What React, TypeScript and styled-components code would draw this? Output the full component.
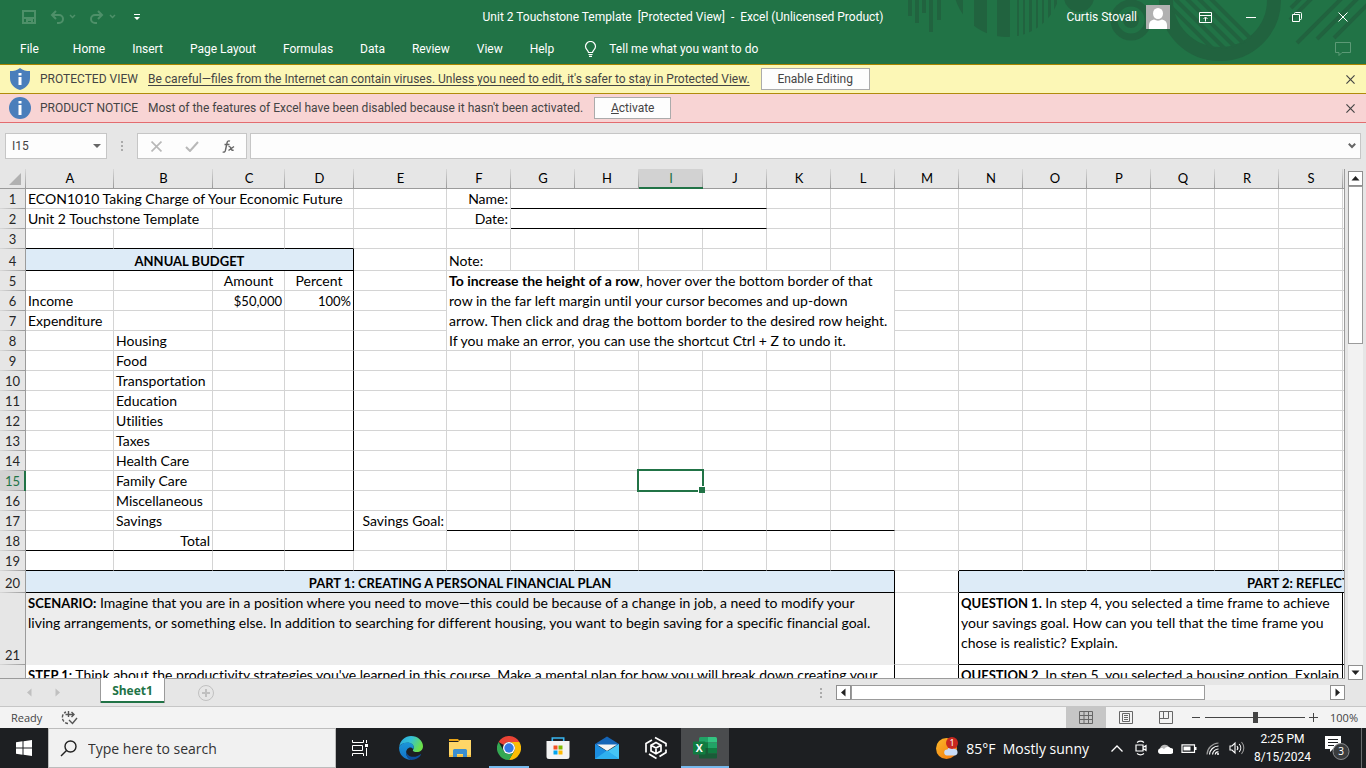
import React from 'react';
import styled, { createGlobalStyle, css } from 'styled-components';

const ui = 'Roboto, "Open Sans", sans-serif';
const shellFont = '"Open Sans", "Noto Sans", sans-serif';
const sheetFont = 'Lato, "Open Sans", sans-serif';
const green = '#217346';

const Global = createGlobalStyle`
  * { box-sizing: border-box; }
  html, body { margin: 0; height: 100%; overflow: hidden; }
  body { font-family: ${ui}; font-size: 12px; color: #444; background: #e6e6e6; }
  button, input { font: inherit; color: inherit; margin: 0; }
  button { border: 0; padding: 0; background: none; }
  svg { display: block; flex: none; }
`;

const Shell = styled.div`
  height: 100vh;
  display: flex;
  flex-direction: column;
`;

/* ---------- title bar and ribbon tabs ---------- */

const Header = styled.header`
  position: relative;
  overflow: hidden;
  background: ${green};
  color: #fff;
  height: 65px;
  flex: none;
  border-bottom: 1px solid #a98500;
`;

const Backdrop = styled.svg`
  position: absolute;
  top: 0;
  right: 0;
`;

const TitleRow = styled.div`
  position: relative;
  display: grid;
  grid-template-columns: 1fr auto 1fr;
  align-items: center;
  height: 34px;
`;

const QuickAccess = styled.div`
  display: flex;
  align-items: center;
  padding-left: 22px;
`;

const IconButton = styled.button<{ $w: number; $h?: number }>`
  width: ${(p) => p.$w}px;
  height: ${(p) => p.$h ?? 24}px;
  display: flex;
  align-items: center;
  justify-content: center;
  flex: none;
`;

const Title = styled.h1`
  margin: 0;
  font-size: 12px;
  font-weight: 400;
  white-space: pre;
`;

const Account = styled.div`
  display: flex;
  align-items: center;
  justify-content: flex-end;
`;

const UserName = styled.span`
  margin-right: 9px;
`;

const WindowButtons = styled.div`
  display: flex;
  align-items: center;
  height: 30px;
  align-self: flex-start;
  margin-left: 12px;
`;

const TabRow = styled.nav`
  position: relative;
  display: flex;
  align-items: center;
  height: 30px;
  padding-left: 6px;
`;

const Tab = styled.button<{ $wide?: boolean }>`
  height: 30px;
  padding: 0 13px 0 14px;
  margin-right: ${(p) => (p.$wide ? 7 : 0)}px;
  white-space: nowrap;
`;

const TellMe = styled.button`
  display: flex;
  align-items: center;
  gap: 12px;
  margin-left: 17px;
  white-space: nowrap;
`;

const Push = styled.span`
  flex: 1;
`;

/* ---------- message bars ---------- */

const Notice = styled.section<{ $bg: string; $line: string }>`
  display: flex;
  align-items: center;
  flex: none;
  height: 29px;
  padding: 0 8px;
  background: ${(p) => p.$bg};
  border-bottom: 1px solid ${(p) => p.$line};
  white-space: nowrap;
`;

const NoticeTitle = styled.strong`
  font-weight: 400;
  width: 108px;
  margin-left: 8px;
`;

const NoticeLink = styled.a`
  color: inherit;
  text-decoration: underline;
  text-underline-offset: 2px;
`;

const NoticeButton = styled.button<{ $w: number }>`
  height: 22px;
  width: ${(p) => p.$w}px;
  margin-left: 11px;
  background: #fdfdfd;
  border: 1px solid #ababab;
`;

/* ---------- formula bar ---------- */

const FormulaBar = styled.div`
  display: flex;
  align-items: center;
  flex: none;
  height: 46px;
  padding: 0 5px;
`;

const Field = styled.div<{ $w?: number; $gap?: number }>`
  display: flex;
  align-items: center;
  height: 26px;
  margin-left: ${(p) => p.$gap ?? 0}px;
  background: #fdfdfd;
  border: 1px solid #c6c6c6;
  ${(p) => (p.$w ? css`width: ${p.$w}px; flex: none;` : css`flex: 1;`)}
`;

const TextInput = styled.input`
  flex: 1;
  min-width: 0;
  border: 0;
  outline: 0;
  padding: 0 6px;
  background: transparent;
`;

const Grip = styled.span`
  display: flex;
  justify-content: center;
  width: 30px;
`;

/* ---------- worksheet ---------- */

const SheetArea = styled.main`
  display: flex;
  flex: 1;
  min-height: 0;
`;

const Viewport = styled.div`
  flex: 1;
  min-width: 0;
  overflow: hidden;
  background: #fff;
  border-right: 1px solid #9b9b9b;
  border-bottom: 1px solid #9b9b9b;
`;

const Grid = styled.table`
  border-collapse: separate;
  border-spacing: 0;
  table-layout: fixed;
  width: 1px;
  font-family: ${sheetFont};
  font-size: 14px;
  font-variant-ligatures: none;
  line-height: 19px;
  color: #000;
`;

const ColHead = styled.th<{ $on?: boolean }>`
  height: 20px;
  padding: 0;
  font-weight: 400;
  font-size: 13px;
  vertical-align: top;
  line-height: 18px;
  color: ${(p) => (p.$on ? green : '#000')};
  border-bottom: ${(p) => (p.$on ? `2px solid ${green}` : '1px solid #9b9b9b')};
  background: linear-gradient(#d8d8d8, #9b9b9b) right / 1px 100% no-repeat ${(p) => (p.$on ? '#d2d2d2' : '#e6e6e6')};
`;

const Corner = styled.th`
  padding: 0;
  border-bottom: 1px solid #9b9b9b;
  background: linear-gradient(#d8d8d8, #9b9b9b) right / 1px 100% no-repeat #e6e6e6;
`;

const RowHead = styled.th<{ $h: number; $on?: boolean }>`
  height: ${(p) => p.$h}px;
  padding: 0 0 1px ${(p) => (p.$on ? 1 : 0)}px;
  font-weight: 400;
  font-size: 13px;
  vertical-align: bottom;
  line-height: 18px;
  color: ${(p) => (p.$on ? green : '#262626')};
  border-right: ${(p) => (p.$on ? `2px solid ${green}` : '1px solid #9b9b9b')};
  background: linear-gradient(to right, #d8d8d8, #9b9b9b) bottom / 100% 1px no-repeat ${(p) => (p.$on ? '#d2d2d2' : '#e6e6e6')};
`;

type CellStyle = {
  $align?: 'left' | 'center' | 'right';
  $small?: boolean;
  $bold?: boolean;
  $bg?: string;
  $right: string;
  $bottom: string;
  $wrap?: boolean;
};

const Cell = styled.td<CellStyle>`
  position: relative;
  padding: 0 2px;
  vertical-align: ${(p) => (p.$wrap ? 'top' : 'bottom')};
  line-height: ${(p) => (p.$wrap ? 20 : p.$small || p.$bold ? 17 : 19)}px;
  white-space: nowrap;
  text-align: ${(p) => p.$align ?? 'left'};
  font-weight: ${(p) => (p.$bold ? 700 : 400)};
  font-size: ${(p) => (p.$small || p.$bold ? 13 : 14)}px;
  background: ${(p) => p.$bg ?? '#fff'};
  border-right: 1px solid ${(p) => p.$right};
  border-bottom: 1px solid ${(p) => p.$bottom};
`;

/* A merged block of text gives its last pixel up to the cell's grid line. */
const Lines = styled.div`
  margin-bottom: -1px;
`;

const Lead = styled.b`
  font-size: 13px;
`;

const Selection = styled.span`
  position: absolute;
  inset: -2px;
  border: 2px solid ${green};
  z-index: 1;
  &::after {
    content: '';
    position: absolute;
    right: -3px;
    bottom: -3px;
    width: 6px;
    height: 6px;
    background: ${green};
    border: solid #fff;
    border-width: 1px 0 0 1px;
  }
`;

/* ---------- scroll bars ---------- */

const VScroll = styled.div`
  display: flex;
  flex-direction: column;
  width: 21px;
  padding: 2px 0 0 3px;
  margin-bottom: -1px;
`;

const ScrollButton = styled.button`
  display: flex;
  align-items: center;
  justify-content: center;
  flex: none;
  width: 15px;
  height: 15px;
  background: #fff;
  border: 1px solid #8f8f8f;
`;

const VTrack = styled.div`
  flex: 1;
  width: 15px;
  background: #f2f2f2;
`;

const VThumb = styled.div`
  height: 33%;
  background: #fff;
  border: 1px solid #9b9b9b;
`;

const HScroll = styled.div`
  display: flex;
  align-items: center;
  width: 509px;
`;

const HTrack = styled.div`
  flex: 1;
  height: 15px;
  background: #f2f2f2;
`;

const HThumb = styled.div`
  width: 74%;
  height: 15px;
  background: #fff;
  border: 1px solid #9b9b9b;
`;

/* ---------- sheet tabs and status bar ---------- */

const TabStrip = styled.div`
  display: flex;
  align-items: center;
  flex: none;
  height: 28px;
  padding-right: 21px;
  border-bottom: 1px solid #c6c6c6;
`;

const SheetNav = styled.div`
  display: flex;
  align-items: center;
  width: 100px;
  padding-left: 15px;
`;

const SheetTab = styled.button`
  position: relative;
  align-self: flex-start;
  width: 65px;
  height: 25px;
  margin-top: -1px;
  background: #fff;
  border: solid #9b9b9b;
  border-width: 0 1px;
  box-shadow: inset 0 -2px ${green};
  color: ${green};
  font-family: ${shellFont};
  font-weight: 700;
`;

const StatusBar = styled.footer`
  display: flex;
  align-items: center;
  flex: none;
  height: 21px;
  padding: 0 8px 0 11px;
  background: #f3f3f3;
  font-family: ${shellFont};
  font-size: 11px;
`;

const ViewButton = styled.button<{ $on?: boolean }>`
  display: flex;
  align-items: center;
  justify-content: center;
  width: 40px;
  height: 21px;
  background: ${(p) => (p.$on ? '#c6c6c6' : 'transparent')};
`;

const ZoomSlider = styled.input`
  appearance: none;
  width: 100px;
  height: 12px;
  background: linear-gradient(#444, #444) center / 100% 1px no-repeat;
  &::-webkit-slider-thumb {
    appearance: none;
    width: 5px;
    height: 11px;
    background: #444;
  }
`;

const ZoomValue = styled.span`
  width: 37px;
  text-align: right;
`;

/* ---------- task bar ---------- */

const Taskbar = styled.footer`
  display: flex;
  align-items: stretch;
  flex: none;
  height: 40px;
  background: #1d1f22;
  color: #fff;
  font-family: ${shellFont};
`;

const Start = styled.button`
  display: flex;
  align-items: center;
  justify-content: center;
  width: 48px;
`;

const Search = styled.label`
  display: flex;
  align-items: center;
  width: 288px;
  padding-left: 11px;
  background: #f1f1f1;
  border: 1px solid #bcbcbc;
  color: #333;
  font-size: 14px;
  input { padding-left: 11px; }
  input::placeholder { color: #333; opacity: 1; }
`;

const Apps = styled.div`
  display: flex;
  gap: 1px;
`;

const AppButton = styled.button<{ $state?: 'open' | 'active'; $after?: number }>`
  display: flex;
  align-items: center;
  justify-content: center;
  width: 48px;
  margin-right: ${(p) => p.$after ?? 0}px;
  ${(p) => p.$state === 'open' && css`background: linear-gradient(#76b9ed, #76b9ed) bottom / 40px 2px no-repeat;`}
  ${(p) => p.$state === 'active' && css`background: linear-gradient(#76b9ed, #76b9ed) bottom / 100% 2px no-repeat, #4a4c4e;`}
`;

const Weather = styled.button`
  display: flex;
  align-items: center;
  gap: 8px;
  margin-right: 16px;
  font-size: 14px;
  white-space: pre;
`;

const TrayButton = styled.button<{ $w: number }>`
  display: flex;
  align-items: center;
  justify-content: center;
  width: ${(p) => p.$w}px;
`;

const Clock = styled.button`
  width: 67px;
  font-family: ${ui};
  line-height: 18px;
  text-align: center;
`;

const ShowDesktop = styled.span`
  width: 5px;
  margin-left: 3px;
  border-left: 1px solid #6a6c6e;
`;

/* ---------- small icons ---------- */

const Cross = ({ size = 10, color = '#444', w = 1.3 }) => (
  <svg width={size} height={size} viewBox="0 0 10 10" stroke={color} strokeWidth={w}>
    <path d="M.5 .5l9 9M9.5 .5l-9 9" />
  </svg>
);

const Caret = ({ color }: { color: string }) => (
  <svg width="8" height="6" fill="none" stroke={color} strokeWidth="2"><path d="M.8 .8L4 4 7.200 .8" /></svg>
);

const Tri = ({ d, color = '#222' }: { d: string; color?: string }) => (
  <svg width="9" height="9" fill={color}><path d={d} /></svg>
);
const up = 'M4.500 2L8.500 6.500H.5z';
const down = 'M4.500 7L.5 2.500h8z';
const left = 'M2 4.500L6.500 .5v8z';
const right = 'M7 4.500L2.500 .5v8z';

const Dots = () => (
  <svg width="2" height="12" fill="#ababab"><path d="M0 1h2v2H0zM0 5h2v2H0zM0 9h2v2H0z" /></svg>
);

const HeaderArt = () => (
  <Backdrop width="466" height="64" viewBox="900 0 466 64" aria-hidden="true">
    <defs>
      <clipPath id="disc"><circle cx="1007" cy="-17" r="54" /></clipPath>
      <clipPath id="hole"><circle cx="1220" cy="0" r="49" /></clipPath>
    </defs>
    <g fill="#21633f">
      <path d="M908 0h4v16h-4zM915 0h4v23h-4zM922 0h4v13h-4zM929 0h4v32h-4zM937 0h4v20h-4z" />
      <g clipPath="url(#disc)">
        <path d="M955 0h8v40h-8zM974 0h13v40h-13zM997 0h13v40h-13zM1017 0h2v40h-2zM1023 0h2v40h-2zM1029 0h3v40h-3zM1036 0h2v40h-2zM1042 0h2v40h-2zM1048 0h3v40h-3zM1054 0h3v40h-3z" />
      </g>
      <circle cx="1079" cy="-3" r="15" />
    </g>
    <g fill="none" stroke="#21633f">
      <circle cx="1131" cy="20" r="17" strokeWidth="7" />
      <circle cx="1131" cy="20" r="5" strokeWidth="6" />
      <circle cx="1220" cy="0" r="54" strokeWidth="14" />
      <g clipPath="url(#hole)" strokeWidth="4">
        <path d="M1168 4l56 56M1175 -1l56 56M1183 -5l56 56M1193 -7l56 56M1204 -8l56 56" />
      </g>
      <g strokeWidth="4">
        <path d="M1291 8l10 -10M1290 20l24 -24M1297 43l46 -46M1317 39l42 -42M1334 38l34 -34" />
      </g>
    </g>
  </Backdrop>
);

/* ---------- worksheet data ---------- */

const columns = 'ABCDEFGHIJKLMNOPQRSTUVWX'.split('');
const colWidth: Record<string, number> = { A: 88, B: 99, C: 72, D: 69, E: 93 };
const tallRows: Record<number, number> = { 4: 22, 20: 22, 21: 72, 22: 192 };
const rowHeights = Array.from({ length: 24 }, (_, i) => tallRows[i + 1] ?? 20);

type Entry = {
  text?: React.ReactNode;
  cols?: number;
  rows?: number;
  align?: 'left' | 'center' | 'right';
  small?: boolean;
  bold?: boolean;
  bg?: string;
  wrap?: boolean;
  bottom?: string;
};

const blue = '#ddebf7';
const entries: Record<string, Entry> = {
  A1: { text: 'ECON1010 Taking Charge of Your Economic Future', cols: 4 },
  F1: { text: 'Name:', align: 'right' },
  G1: { cols: 4 },
  A2: { text: 'Unit 2 Touchstone Template', cols: 2 },
  F2: { text: 'Date:', align: 'right' },
  G2: { cols: 4 },
  A4: { text: 'ANNUAL BUDGET', cols: 4, align: 'center', bold: true, bg: blue },
  F4: { text: 'Note:' },
  C5: { text: 'Amount', align: 'center' },
  D5: { text: 'Percent', align: 'center' },
  F5: {
    cols: 7, rows: 4, wrap: true,
    text: (
      <Lines>
        <b>To increase the height of a row</b>, hover over the bottom border of that<br />
        row in the far left margin until your cursor becomes and up-down<br />
        arrow. Then click and drag the bottom border to the desired row height.<br />
        If you make an error, you can use the shortcut Ctrl + Z to undo it.
      </Lines>
    ),
  },
  A6: { text: 'Income' },
  C6: { text: '$50,000', align: 'right', small: true },
  D6: { text: '100%', align: 'right', small: true },
  A7: { text: 'Expenditure' },
  B8: { text: 'Housing' },
  B9: { text: 'Food' },
  B10: { text: 'Transportation' },
  B11: { text: 'Education' },
  B12: { text: 'Utilities' },
  B13: { text: 'Taxes' },
  B14: { text: 'Health Care' },
  B15: { text: 'Family Care' },
  I15: { text: <Selection /> },
  B16: { text: 'Miscellaneous' },
  B17: { text: 'Savings' },
  E17: { text: 'Savings Goal:', align: 'right' },
  B18: { text: 'Total', align: 'right' },
  A20: { text: 'PART 1: CREATING A PERSONAL FINANCIAL PLAN', cols: 12, align: 'center', bold: true, bg: blue },
  N20: { text: 'PART 2: REFLECTION', cols: 11, align: 'center', bold: true, bg: blue },
  A21: {
    cols: 12, wrap: true, bg: '#ededed', bottom: '#ededed',
    text: (
      <Lines>
        <Lead>SCENARIO:</Lead> Imagine that you are in a position where you need to move—this could be because of a change in job, a need to modify your<br />
        living arrangements, or something else. In addition to searching for different housing, you want to begin saving for a specific financial goal.
      </Lines>
    ),
  },
  N21: {
    cols: 6, wrap: true,
    text: (
      <Lines>
        <Lead>QUESTION 1.</Lead> In step 4, you selected a time frame to achieve<br />
        your savings goal. How can you tell that the time frame you<br />
        chose is realistic? Explain.
      </Lines>
    ),
  },
  A22: {
    cols: 12, wrap: true,
    text: (
      <Lines>
        <Lead>STEP 1:</Lead> Think about the productivity strategies you've learned in this course. Make a mental plan for how you will break down creating your
      </Lines>
    ),
  },
  N22: {
    cols: 6, wrap: true,
    text: (<Lines><Lead>QUESTION 2.</Lead> In step 5, you selected a housing option. Explain</Lines>),
  },
};

const inRange = (c: number, from: string, to: string) => c >= columns.indexOf(from) && c <= columns.indexOf(to);

const rightEdge = (r: number, c: number) => {
  const col = columns[c];
  if (col === 'D' && r >= 4 && r <= 18) return '#000';
  if ((col === 'L' || col === 'M') && r >= 20 && r <= 22) return '#000';
  if (col === 'S' && (r === 21 || r === 22)) return '#000';
  return '#d4d4d4';
};

const bottomEdge = (r: number, c: number) => {
  if ([3, 4, 18].includes(r) && inRange(c, 'A', 'D')) return '#000';
  if ((r === 1 || r === 2) && inRange(c, 'G', 'J')) return '#000';
  if (r === 17 && inRange(c, 'F', 'L')) return '#000';
  if ([19, 20, 22].includes(r) && inRange(c, 'A', 'L')) return '#000';
  if (r >= 19 && r <= 22 && inRange(c, 'N', 'X')) return '#000';
  return '#d4d4d4';
};

function SheetRow({ r }: { r: number }) {
  const cells: React.ReactNode[] = [];
  let c = 0;
  while (c < columns.length) {
    if (columns[c] === 'F' && r >= 6 && r <= 8) {
      c += 7;
      continue;
    }
    const e = entries[columns[c] + r] ?? {};
    const span = e.cols ?? 1;
    cells.push(
      <Cell
        key={c}
        colSpan={span}
        rowSpan={e.rows}
        $align={e.align}
        $small={e.small}
        $bold={e.bold}
        $bg={e.bg}
        $wrap={e.wrap}
        $right={rightEdge(r, c + span - 1)}
        $bottom={e.bottom ?? bottomEdge(r, c)}
      >
        {e.text}
      </Cell>,
    );
    c += span;
  }
  return (
    <tr>
      <RowHead scope="row" $h={rowHeights[r - 1]} $on={r === 15}>{r}</RowHead>
      {cells}
    </tr>
  );
}

const Worksheet = () => (
  <Grid>
    <colgroup>
      <col style={{ width: 26 }} />
      {columns.map((c) => <col key={c} style={{ width: colWidth[c] ?? 64 }} />)}
    </colgroup>
    <thead>
      <tr>
        <Corner>
          <svg width="25" height="19" fill="#b1b1b1" aria-label="Select all"><path d="M21 4v12H9z" /></svg>
        </Corner>
        {columns.map((c) => <ColHead key={c} scope="col" $on={c === 'I'}>{c}</ColHead>)}
      </tr>
    </thead>
    <tbody>{rowHeights.map((_, i) => <SheetRow key={i} r={i + 1} />)}</tbody>
  </Grid>
);

/* ---------- task bar icons ---------- */

const Edge = () => (
  <svg width="24" height="24" viewBox="0 0 24 24">
    <defs>
      <linearGradient id="e1" x1="0" y1="0" x2="1" y2=".4"><stop offset="0" stopColor="#2aa7e0" /><stop offset=".5" stopColor="#35c1d6" /><stop offset="1" stopColor="#6be04a" /></linearGradient>
      <linearGradient id="e2" x1="0" y1="0" x2="0" y2="1"><stop offset="0" stopColor="#1b95d8" /><stop offset="1" stopColor="#1373c6" /></linearGradient>
    </defs>
    <path fill="url(#e1)" d="M0.300 10.500C1.200 4.200 6.200 0 12 0c7 0 12 5 12 10.200 0 3.500-2.800 5.900-6.200 5.900-2.600 0-4-.9-4-1.800 0-.8 1-1 1-2.900 0-2.600-3-4.600-6.400-4.600C4.700 6.800 1.800 8 .3 10.500z" />
    <path fill="url(#e2)" d="M.2 10.800C1.500 8.200 4.600 6.600 8.300 6.600c3.500 0 6.500 2 6.500 4.700 0 .9-.3 1.600-.6 2-.6-1.300-1.700-1.800-2.800-1.800-2.600 0-4.600 2.800-4.300 6 .3 2.900 2.300 5.300 5.200 6.500C5.400 24.300-.8 18.200.2 10.800z" />
    <path fill="#0c4f9e" d="M7.100 15.200c.4 3.400 3.400 5.600 7.200 5.600 3.100 0 5.400-1.200 7.200-2.600.4-.2.800.1.500.6C20 22 16.500 24 12.600 24 9.200 22.800 6.500 19.400 7.100 15.200z" />
  </svg>
);

const Folder = () => (
  <svg width="22" height="19" viewBox="0 0 22 19">
    <path fill="#e8a317" d="M0 0h9l1.500 2H0z" />
    <path fill="#ffd667" d="M0 3h9l2-2h11v17H0z" />
    <path fill="#f5bf3f" d="M0 16h22v2H0z" />
    <path fill="#3c8fd0" d="M4 11.500a1.500 1.500 0 0 1 1.500-1.500h11a1.500 1.500 0 0 1 1.500 1.500V18h-4v-3H8v3H4z" />
  </svg>
);

const Chrome = () => (
  <svg width="24" height="24" viewBox="0 0 24 24">
    <path fill="#ea4335" d="M1.600 6A12 12 0 0 1 22.400 6H12a6 6 0 0 0-5.200 3z" />
    <path fill="#fbbc05" d="M22.400 6A12 12 0 0 1 12 24l5.200-9A6 6 0 0 0 12 6z" />
    <path fill="#34a853" d="M12 24A12 12 0 0 1 1.600 6l5.200 9A6 6 0 0 0 17.200 15z" />
    <circle cx="12" cy="12" r="6" fill="#fff" />
    <circle cx="12" cy="12" r="4.700" fill="#3478e5" />
  </svg>
);

const Store = () => (
  <svg width="24" height="24" viewBox="0 0 24 24">
    <path fill="none" stroke="#38b6f1" strokeWidth="1.600" d="M6.300 6V2h11.400v4" />
    <path fill="#f3f3f3" d="M.5 5h23v15.500a2.500 2.500 0 0 1-2.500 2.500H3A2.500 2.500 0 0 1 .5 20.500z" />
    <path fill="#f25022" d="M7.500 9.500h4v4h-4z" />
    <path fill="#7fba00" d="M12.500 9.500h4v4h-4z" />
    <path fill="#00a4ef" d="M7.500 14.500h4v4h-4z" />
    <path fill="#ffb900" d="M12.500 14.500h4v4h-4z" />
  </svg>
);

const Mail = () => (
  <svg width="24" height="24" viewBox="0 0 24 24">
    <path fill="#1565b7" d="M0 8L12 .5 24 8v2H0z" />
    <path fill="#f4f4f4" d="M2 8.500h20L12 15z" />
    <path fill="#45c4f5" d="M24 8v15H0z" />
    <path fill="#1b8de0" d="M0 8l12 7.200L24 23H0z" />
    <path fill="#2fb0ef" d="M0 23l12-8.500L24 23z" />
  </svg>
);

const Cube = () => (
  <svg width="22" height="24" viewBox="0 0 22 24" fill="none" stroke="#fff" strokeWidth="1.700">
    <path d="M11 6.500l5 2.800v5.600l-5 2.800-5-2.800V9.300zM6 9.300l5 2.800 5-2.800M11 12.100v5.600" />
    <path d="M1 16.500v-9l6-3.500M10 1.500l11 6v3M21 13.500v3l-6.500 4M11.500 22.500L4 18" />
  </svg>
);

const Excel = () => (
  <svg width="24" height="22" viewBox="0 0 24 22">
    <path fill="#21a366" d="M6 1.500A1.500 1.500 0 0 1 7.500 0H15v5.500H6z" />
    <path fill="#33c481" d="M15 0h7.500A1.500 1.500 0 0 1 24 1.500v4h-9z" />
    <path fill="#107c41" d="M6 5.500h9V11H6zM15 11h9v5.500h-9z" />
    <path fill="#21a366" d="M15 5.500h9V11h-9z" />
    <path fill="#185c37" d="M6 11h9v5.500h9v4a1 1 0 0 1-1 1H7a1 1 0 0 1-1-1z" />
    <rect y="4.500" width="12.500" height="13" rx="1" fill="#107c41" />
    <text x="6.200" y="14.800" textAnchor="middle" fontSize="10.500" fontWeight="700" fill="#fff" fontFamily="Open Sans">X</text>
  </svg>
);

const WeatherIcon = () => (
  <svg width="22" height="22" viewBox="0 0 22 22">
    <defs><linearGradient id="sun" x1="0" y1="0" x2="1" y2="1"><stop offset="0" stopColor="#fbb829" /><stop offset="1" stopColor="#f2760e" /></linearGradient></defs>
    <circle cx="10.500" cy="11.500" r="10.500" fill="url(#sun)" />
    <path fill="#c9dcf8" d="M11 18.500a3 3 0 0 1 .4-6A4 4 0 0 1 18.500 12a3.300 3.300 0 0 1 .5 6.500z" />
    <circle cx="16" cy="6" r="6" fill="#c8281f" />
    <text x="16" y="9" textAnchor="middle" fontSize="9" fill="#fff" fontFamily="Noto Sans">1</text>
  </svg>
);

const apps: { name: string; icon: React.ReactNode; state?: 'open' | 'active'; after?: number }[] = [
  {
    name: 'Task view', after: 2,
    icon: (
      <svg width="18" height="16" fill="none" stroke="#fff">
        <path d="M1.500 0v2.500h11V0M1.500 16v-2.500h11V16M1.500 5.500h10v5h-10zM15.500 0v3M15.500 8v8" />
        <path d="M14 4h3v3h-3z" fill="#fff" stroke="none" />
      </svg>
    ),
  },
  { name: 'Edge', icon: <Edge /> },
  { name: 'File Explorer', icon: <Folder /> },
  { name: 'Chrome', icon: <Chrome />, state: 'open' },
  { name: 'Store', icon: <Store /> },
  { name: 'Mail', icon: <Mail /> },
  { name: '3D Viewer', icon: <Cube /> },
  { name: 'Excel', icon: <Excel />, state: 'active' },
];

const ribbonTabs = ['Home', 'Insert', 'Page Layout', 'Formulas', 'Data', 'Review', 'View', 'Help'];

export default function App() {
  return (
    <Shell>
      <Global />
      <Header>
        <HeaderArt />
        <TitleRow>
          <QuickAccess>
            <IconButton $w={14} aria-label="Save">
              <svg width="14" height="14" fill="none" stroke="#4e9069" strokeWidth="2">
                <path d="M1 1h12v12H1zM1 8h12M5 13v-3h5v3" />
              </svg>
            </IconButton>
            <IconButton $w={54} aria-label="Undo">
              <svg width="26" height="14" fill="none" stroke="#4e9069" strokeWidth="2">
                <path d="M6 1L2 5l4 4M2 5h7a4 4 0 0 1 0 8H7" />
                <path d="M20 5l2.500 2.500L25 5" strokeWidth="1.500" />
              </svg>
            </IconButton>
            <IconButton $w={26} aria-label="Redo">
              <svg width="28" height="14" fill="none" stroke="#4e9069" strokeWidth="2">
                <path d="M9 1l4 4-4 4M13 5H6a4 4 0 0 0 0 8h2" />
                <path d="M21 5l2.500 2.500L26 5" strokeWidth="1.500" />
              </svg>
            </IconButton>
            <IconButton $w={42} aria-label="Customize Quick Access Toolbar">
              <svg width="6" height="7" fill="#fff"><path d="M0 0h6v1H0zM0 3h6L3 6z" /></svg>
            </IconButton>
          </QuickAccess>
          <Title>{'Unit 2 Touchstone Template  [Protected View]  -  Excel (Unlicensed Product)'}</Title>
          <Account>
            <UserName>Curtis Stovall</UserName>
            <svg width="24" height="24" aria-label="Profile picture">
              <path fill="#b1b1b1" d="M0 0h24v24H0z" />
              <ellipse cx="12" cy="8.500" rx="5" ry="5.500" fill="#fff" />
              <path fill="#fff" d="M3 24v-4c0-3 2-5 5-5.500 2.500 1.500 5.500 1.500 8 0 3 .5 5 2.500 5 5.500v4z" />
            </svg>
            <WindowButtons>
              <IconButton $w={46} aria-label="Ribbon display options">
                <svg width="13" height="11" fill="none" stroke="#fff"><path d="M.5 .5h12v10H.5zM.5 3.500h12M6.500 9.500V5.500M4.500 7l2-2 2 2" /></svg>
              </IconButton>
              <IconButton $w={46} aria-label="Minimize">
                <svg width="10" height="1" fill="#fff"><path d="M0 0h10v1H0z" /></svg>
              </IconButton>
              <IconButton $w={46} aria-label="Restore">
                <svg width="10" height="10" fill="none" stroke="#fff"><path d="M.5 2.500h7v7h-7zM2.500 2.500V1.500a1 1 0 0 1 1-1h5a1 1 0 0 1 1 1v5a1 1 0 0 1-1 1h-1" /></svg>
              </IconButton>
              <IconButton $w={46} aria-label="Close"><Cross color="#fff" w={1} /></IconButton>
            </WindowButtons>
          </Account>
        </TitleRow>
        <TabRow>
          <Tab $wide>File</Tab>
          {ribbonTabs.map((t) => <Tab key={t}>{t}</Tab>)}
          <TellMe>
            <svg width="13" height="16" fill="none" stroke="#fff" strokeWidth="1.200">
              <path d="M4.500 11.500c0-2-3-3-3-6a5 5 0 0 1 10 0c0 3-3 4-3 6zM4.500 13.500h4M5 15.400h3" />
            </svg>
            Tell me what you want to do
          </TellMe>
          <Push />
          <IconButton $w={46} aria-label="Comments">
            <svg width="16" height="14" fill="none" stroke="#5c9a76"><path d="M.5 .5h15v10H7l-3 3v-3H.5z" /></svg>
          </IconButton>
        </TabRow>
      </Header>

      <Notice $bg="#fcf7b6" $line="#b08c0c">
        <svg width="24" height="22" viewBox="0 0 24 22">
          <path fill="#4a7ebb" d="M12 0c3 2.500 6 3 10 3v7c0 6-4 10-10 12C6 20 2 16 2 10V3c4 0 7-.5 10-3z" />
          <path fill="#fff" d="M10.500 5h3v2.500h-3zM10.500 9h3v8h-3z" />
        </svg>
        <NoticeTitle>PROTECTED VIEW</NoticeTitle>
        <NoticeLink href="#">Be careful—files from the Internet can contain viruses. Unless you need to edit, it's safer to stay in Protected View.</NoticeLink>
        <NoticeButton $w={109}>Enable Editing</NoticeButton>
        <Push />
        <IconButton $w={16} aria-label="Close message"><Cross size={9} /></IconButton>
      </Notice>
      <Notice $bg="#f8d4d4" $line="#e36c6f">
        <svg width="24" height="22" viewBox="0 0 24 22">
          <circle cx="12" cy="11" r="11" fill="#4a7ebb" />
          <path fill="#fff" d="M10.500 4h3v2.500h-3zM10.500 8h3v10h-3z" />
        </svg>
        <NoticeTitle>PRODUCT NOTICE</NoticeTitle>
        <span>Most of the features of Excel have been disabled because it hasn't been activated.</span>
        <NoticeButton $w={77}><u>A</u>ctivate</NoticeButton>
        <Push />
        <IconButton $w={16} aria-label="Close message"><Cross size={9} /></IconButton>
      </Notice>

      <FormulaBar>
        <Field $w={102}>
          <TextInput defaultValue="I15" aria-label="Name box" />
          <IconButton $w={19} aria-label="Named ranges">
            <svg width="8" height="4" fill="#666"><path d="M0 0h8L4 4z" /></svg>
          </IconButton>
        </Field>
        <Grip><Dots /></Grip>
        <Field $w={110}>
          <IconButton $w={36} aria-label="Cancel"><Cross size={11} color="#b8b8b8" w={1.5} /></IconButton>
          <IconButton $w={36} aria-label="Enter">
            <svg width="14" height="11" fill="none" stroke="#b8b8b8" strokeWidth="2"><path d="M1 6l4 4 8-9" /></svg>
          </IconButton>
          <IconButton $w={36} aria-label="Insert function">
            <svg width="13" height="13" fill="none" stroke="#666" strokeWidth="1.400">
              <path d="M8 1.200C6 .3 5.300 1.500 5 3L3.500 10c-.3 1.800-1.200 2.500-2.800 2M2.500 4.500h5" />
              <path d="M6.500 6.500c1.500-.5 2 .5 2.500 2s1.200 2.300 2.700 1.500M12 6.500L6.500 10.500" />
            </svg>
          </IconButton>
        </Field>
        <Field $gap={3}>
          <TextInput aria-label="Formula" />
          <IconButton $w={16} aria-label="Expand formula bar"><Caret color="#666" /></IconButton>
        </Field>
      </FormulaBar>

      <SheetArea>
        <Viewport><Worksheet /></Viewport>
        <VScroll>
          <ScrollButton aria-label="Scroll up"><Tri d={up} /></ScrollButton>
          <VTrack><VThumb /></VTrack>
          <ScrollButton aria-label="Scroll down"><Tri d={down} /></ScrollButton>
        </VScroll>
      </SheetArea>

      <TabStrip>
        <SheetNav>
          <IconButton $w={28} aria-label="Previous sheet"><Tri d={left} color="#c0c0c0" /></IconButton>
          <IconButton $w={28} aria-label="Next sheet"><Tri d={right} color="#c0c0c0" /></IconButton>
        </SheetNav>
        <SheetTab>Sheet1</SheetTab>
        <IconButton $w={82} aria-label="New sheet">
          <svg width="16" height="16" fill="none" stroke="#c0c0c0"><circle cx="8" cy="8" r="7.500" /><path strokeWidth="2" d="M8 4v8M4 8h8" /></svg>
        </IconButton>
        <Push />
        <Grip><Dots /></Grip>
        <HScroll>
          <ScrollButton aria-label="Scroll left"><Tri d={left} /></ScrollButton>
          <HTrack><HThumb /></HTrack>
          <ScrollButton aria-label="Scroll right"><Tri d={right} /></ScrollButton>
        </HScroll>
      </TabStrip>

      <StatusBar>
        <span>Ready</span>
        <IconButton $w={54} $h={20} aria-label="Accessibility">
          <svg width="17" height="15" fill="none" stroke="#555" strokeWidth="1.400">
            <path d="M7 13.500A6 6 0 0 1 5 2" strokeDasharray="3 1.500" />
            <path d="M7.500 1v6M4.500 4.500h8M10.500 2l2.500 2.500-2.500 2.500M8 10l3.500 3.500L16 8" />
          </svg>
        </IconButton>
        <Push />
        <ViewButton $on aria-label="Normal">
          <svg width="14" height="13" fill="none" stroke="#666"><path d="M.5 .5h13v12H.5zM.5 4.500h13M.5 8.500h13M5 .5v12M9.500 .5v12" /></svg>
        </ViewButton>
        <ViewButton aria-label="Page layout">
          <svg width="14" height="13" fill="none" stroke="#666"><path d="M.5 .5h13v12H.5zM3.500 2.500h7v8h-7zM5 4.500h4M5 6.500h4M5 8.500h4" /></svg>
        </ViewButton>
        <ViewButton aria-label="Page break preview">
          <svg width="14" height="13" fill="none" stroke="#666"><path d="M.5 .5h13v12H.5zM4.500 .5v7M9.500 .5v7M.5 7.500h9" /></svg>
        </ViewButton>
        <IconButton $w={19} $h={20} aria-label="Zoom out"><svg width="8" height="1" fill="#444"><path d="M0 0h8v1H0z" /></svg></IconButton>
        <ZoomSlider type="range" min="0" max="100" defaultValue="50" aria-label="Zoom" />
        <IconButton $w={16} $h={20} aria-label="Zoom in"><svg width="9" height="9" stroke="#444"><path d="M4.500 0v9M0 4.500h9" /></svg></IconButton>
        <ZoomValue>100%</ZoomValue>
      </StatusBar>

      <Taskbar>
        <Start aria-label="Start">
          <svg width="16" height="16" fill="#fff"><path d="M0 2.200L6.500 1.300v6.200H0zM7.500 1.200L16 0v7.500H7.500zM0 8.500h6.500v6.200L0 13.800zM7.500 8.500H16V16l-8.500-1.200z" /></svg>
        </Start>
        <Search>
          <svg width="17" height="17" fill="none" stroke="#222" strokeWidth="1.400"><circle cx="10.500" cy="6.500" r="5.500" /><path d="M6.500 10.500L1 16" /></svg>
          <TextInput placeholder="Type here to search" aria-label="Type here to search" />
        </Search>
        <Apps>
          {apps.map((a) => (
            <AppButton key={a.name} aria-label={a.name} $state={a.state} $after={a.after}>{a.icon}</AppButton>
          ))}
        </Apps>
        <Push />
        <Weather><WeatherIcon />{'85°F  Mostly sunny'}</Weather>
        <TrayButton $w={24} aria-label="Show hidden icons">
          <svg width="12" height="7" fill="none" stroke="#fff" strokeWidth="1.300"><path d="M.5 6.500L6 1l5.500 5.500" /></svg>
        </TrayButton>
        <TrayButton $w={24} aria-label="Meet now">
          <svg width="12" height="16" fill="none" stroke="#fff" strokeWidth="1.200">
            <path d="M1 5h7v6H1zM8 7.500l3-2v5l-3-2zM2 2.500c2-1.500 5-1.500 7 0M2 13.500c2 1.500 5 1.500 7 0" />
          </svg>
        </TrayButton>
        <TrayButton $w={24} aria-label="OneDrive">
          <svg width="16" height="11"><path fill="#b9b9b9" d="M3 5.500A5 5 0 0 1 12 4L8 8z" /><path fill="#fff" d="M3 11a3 3 0 0 1 .5-5.800c1.500-.3 3 .3 3.500 1A4 4 0 0 1 13.500 5a3 3 0 0 1 0 6z" /></svg>
        </TrayButton>
        <TrayButton $w={24} aria-label="Battery">
          <svg width="16" height="9" fill="none" stroke="#fff" strokeWidth="1.200"><path d="M1 .8h12.500v7.500H1z" /><path fill="#fff" stroke="none" d="M2.500 2.500h7v4h-7zM14 3h1.500v3H14z" /></svg>
        </TrayButton>
        <TrayButton $w={24} aria-label="Network">
          <svg width="14" height="13" fill="none" stroke="#fff" strokeWidth="1.200">
            <path stroke="#9a9a9a" d="M1 12.500A12 12 0 0 1 12.500 1" />
            <path d="M3.500 12.500a9 9 0 0 1 9-8.500M6.500 12.500a6 6 0 0 1 6-5.500M9.300 12.500a3 3 0 0 1 3.200-2.700" /><circle cx="12" cy="12" r="1" fill="#fff" stroke="none" />
          </svg>
        </TrayButton>
        <TrayButton $w={24} aria-label="Volume">
          <svg width="16" height="14" fill="none" stroke="#fff" strokeWidth="1.100">
            <path d="M1 5h2l3-3v10L3 9H1zM8 5a3 3 0 0 1 0 4M10.200 3a6 6 0 0 1 0 8" /><path stroke="#999" d="M12.500 1a9 9 0 0 1 0 12" />
          </svg>
        </TrayButton>
        <Clock>2:25 PM<br />8/15/2024</Clock>
        <TrayButton $w={42} aria-label="Notifications">
          <svg width="25" height="24" viewBox="0 0 25 24">
            <path fill="#fff" d="M0 0h16v13H8l-3 3v-3H0z" />
            <path stroke="#1d1f22" d="M3 3.500h10M3 6.500h10M3 9.500h6" />
            <circle cx="16" cy="15.500" r="8" fill="#3a3c3e" stroke="#8a8c8e" />
            <text x="16" y="19" textAnchor="middle" fontSize="10" fill="#fff" fontFamily="Noto Sans">3</text>
          </svg>
        </TrayButton>
        <ShowDesktop />
      </Taskbar>
    </Shell>
  );
}
